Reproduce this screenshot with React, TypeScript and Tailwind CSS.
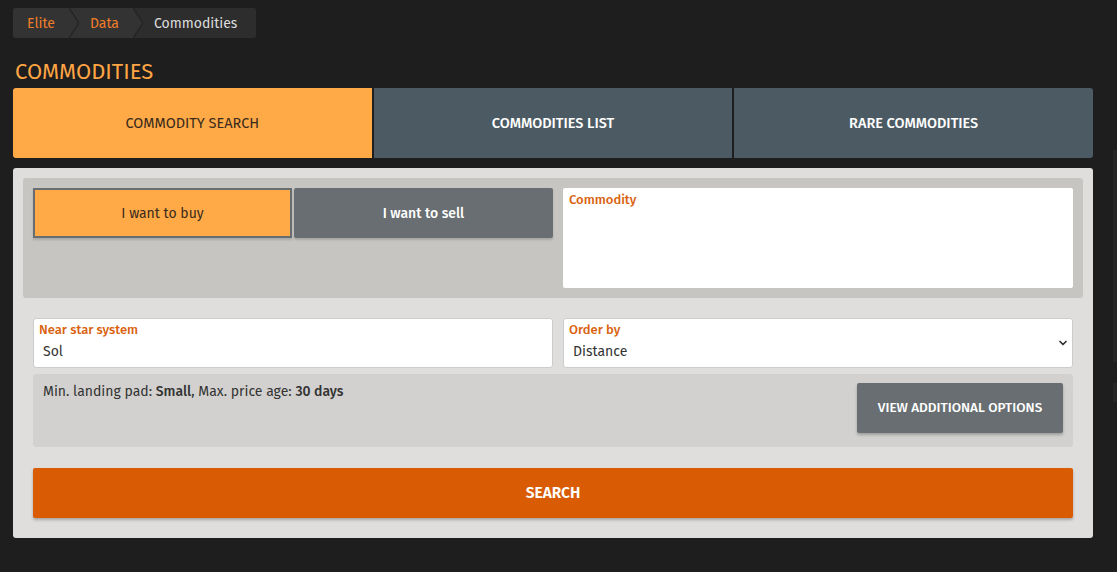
// Commodities search page
import { ChevronDown } from 'lucide-react';

const font = { fontFamily: '"Fira Sans", "Noto Sans", "Open Sans", sans-serif' };

const Breadcrumb = () => {
  const crumbs = [
    { label: 'Elite', link: true },
    { label: 'Data', link: true },
    { label: 'Commodities', link: false },
  ];

  return (
    <nav className="flex h-[30px] w-fit overflow-hidden rounded-[3px] bg-[#2d2d2d] text-[14px]">
      {crumbs.map((c, i) => (
        <div key={c.label} className="relative flex items-center">
          <span
            className={`flex h-full items-center ${i === 0 ? 'pl-[14px]' : 'pl-[21px]'} ${
              c.link ? 'pr-[14px] text-[#f07d2a]' : 'pr-[19px] text-[#dcdcdc]'
            } ${c.link ? 'bg-[#333333]' : 'bg-[#2d2d2d]'}`}
          >
            {c.label}
          </span>
          {c.link && (
            <svg className="absolute -right-[10px] top-0 z-10 h-[30px] w-[10px]" viewBox="0 0 10 30">
              <polygon points="0,0 10,15 0,30" fill="#333333" />
              <polyline points="0,0 10,15 0,30" fill="none" stroke="#252525" strokeWidth="1.5" />
            </svg>
          )}
        </div>
      ))}
    </nav>
  );
};

const Tabs = () => (
  <div className="flex gap-[2px] overflow-hidden rounded-[3px]">
    <div className="flex h-[70px] flex-1 items-center justify-center bg-[#ffaa47] pt-[2px] text-[14.5px] text-[#3a2b1c]">
      COMMODITY SEARCH
    </div>
    <div className="flex h-[70px] flex-1 items-center justify-center bg-[#4c5b63] pt-[2px] text-[14.5px] font-medium text-white">
      COMMODITIES LIST
    </div>
    <div className="flex h-[70px] flex-1 items-center justify-center bg-[#4c5b63] pt-[2px] text-[14.5px] font-medium text-white">
      RARE COMMODITIES
    </div>
  </div>
);

export default function App() {
  return (
    <div className="relative min-h-[572px] bg-[#1e1e1e] pl-[13px] pt-[8px]" style={font}>
      <Breadcrumb />

      <h1 className="mt-[20px] pl-[2px] text-[22px] leading-[28px] text-[#ffa544]">COMMODITIES</h1>

      <div className="mt-[2px] w-[1080px]">
        <Tabs />

        <div className="mt-[10px] rounded-[3px] bg-[#dfdedc] p-[10px] pb-[20px]">
          {/* buy / sell + commodity */}
          <div className="flex gap-[10px] rounded-[3px] bg-[#c6c5c1] p-[10px]">
            <div className="flex w-[520px] items-start">
              <button className="h-[50px] w-[259px] border-2 border-[#676d70] bg-[#ffaa47] text-[14px] text-[#3a2b1c] shadow-[0_2px_2px_rgba(0,0,0,0.15)]">
                I want to buy
              </button>
              <button className="ml-[2px] h-[50px] w-[259px] rounded-[2px] bg-[#686e71] text-[14px] font-medium text-white shadow-[0_2px_2px_rgba(0,0,0,0.15)]">
                I want to sell
              </button>
            </div>
            <div className="h-[100px] flex-1 rounded-[2px] bg-white px-[6px] pt-[2px]">
              <div className="text-[13px] font-medium text-[#d9620f]">Commodity</div>
            </div>
          </div>

          {/* location / order */}
          <div className="mt-[20px] px-[10px]">
            <div className="flex gap-[10px]">
              <div className="h-[50px] w-[520px] rounded-[3px] border border-[#cccccc] bg-white px-[5px] pt-[2px]">
                <div className="text-[13px] font-medium leading-[18px] text-[#d9620f]">Near star system</div>
                <div className="pl-[4px] text-[14px] leading-[26px] text-[#333]">Sol</div>
              </div>
              <div className="relative h-[50px] flex-1 rounded-[3px] border border-[#cccccc] bg-white px-[5px] pt-[2px]">
                <div className="text-[13px] font-medium leading-[18px] text-[#d9620f]">Order by</div>
                <div className="pl-[4px] text-[14px] leading-[26px] text-[#333]">Distance</div>
                <ChevronDown className="absolute right-[3px] top-[18px] h-[12px] w-[12px] text-[#333]" strokeWidth={3.5} />
              </div>
            </div>

            <div className="mt-[6px] flex h-[73px] justify-between rounded-[3px] bg-[#d2d1cf] pl-[10px] pr-[10px] pt-[9px]">
              <p className="text-[14px] leading-[18px] text-[#333]">
                Min. landing pad: <b className="font-medium">Small</b>, Max. price age:{' '}
                <b className="font-medium">30 days</b>
              </p>
              <button className="h-[50px] w-[206px] rounded-[2px] bg-[#686e71] text-[13.5px] font-medium text-white shadow-[0_2px_3px_rgba(0,0,0,0.25)]">
                VIEW ADDITIONAL OPTIONS
              </button>
            </div>

            <button className="mt-[21px] h-[50px] w-full rounded-[2px] bg-[#d95c05] pt-[1px] text-[15.5px] font-semibold text-white shadow-[0_2px_3px_rgba(0,0,0,0.25)]">
              SEARCH
            </button>
          </div>
        </div>
      </div>

      {/* edge of a hidden side panel */}
      <div className="absolute right-0 top-[150px] h-[212px] w-[4px] bg-[#262626]" />
      <div className="absolute right-0 top-[383px] h-[19px] w-[4px] bg-[#262626]" />
    </div>
  );
}
